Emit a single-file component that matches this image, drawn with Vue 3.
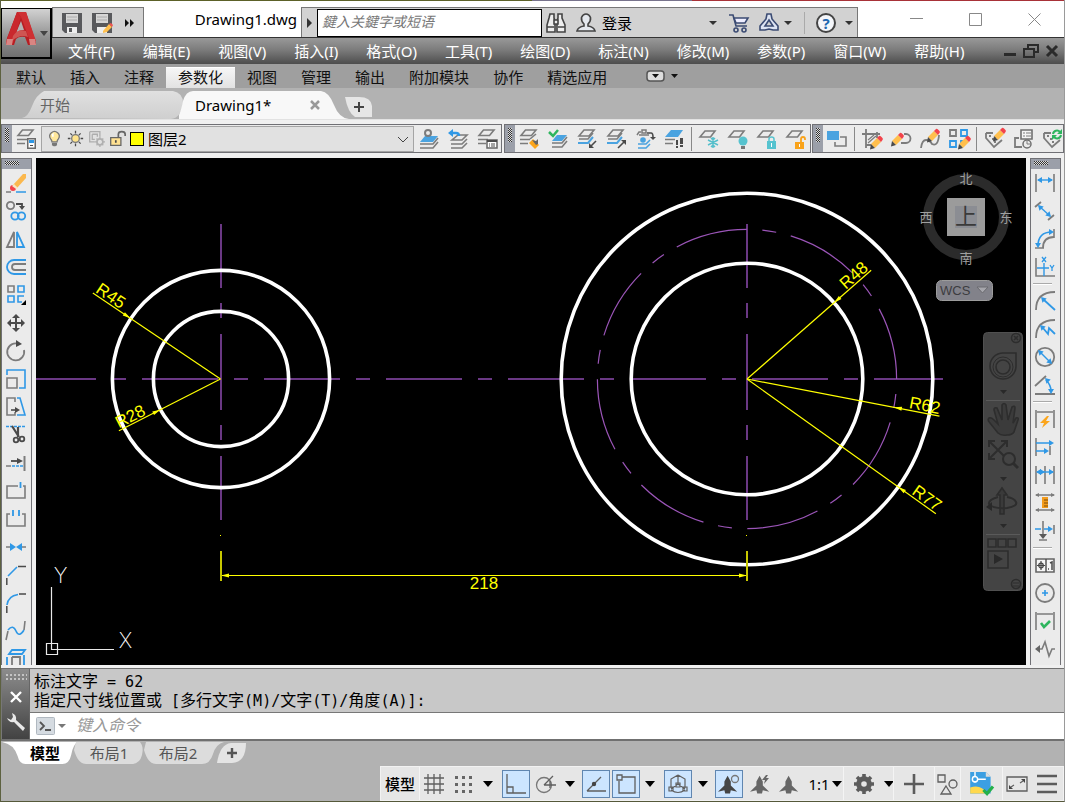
<script setup>
const line = (d, c, w) => `<path d="${d}" fill="none" stroke="${c}" stroke-width="${w}"/>`
const g = (d, w = 2) => line(d, '#7c7c7c', w)
const b = (d, w = 2) => line(d, '#2f98e6', w)
const k = (d, w = 2) => line(d, '#4a4a4a', w)
const f = (d, c) => `<path d="${d}" fill="${c}"/>`

const pencil = (x, y) =>
  `<g transform="translate(${x} ${y})">` +
  f('M1 7l6-6 4 4-6 6z', '#ffbf4d') + f('M7 1l2-2q1-.5 2 .5l1.500 1.500q.8 1 0 2L11 5z', '#f2434b') +
  f('M1 7l4 4-5 1.500z', '#4a4a4a') + '</g>'
const half = g('M6.500 1H17l-4.500 5.500H2z', 1.6) + g('M1 10.500h10M1 14.500h8', 1.6)
const sheet = g('M6 2h10l-4.500 6H1z', 1.6)
const tag = g('M2 4v5l8 9 8-7M2 4h7', 1.8) + f('M5 6h2v2H5zM8 9h2v2H8zM11 7h2v2h-2zM10 12h2v2h-2z', '#7c7c7c')
const head = (x, y, r, c = '#2f98e6') => `<path d="M0 0L-5-3V3z" fill="${c}" transform="translate(${x} ${y}) rotate(${r})"/>`

const icons = {
  layerProps: half + f('M11 9h9v11h-9z', '#6b6b6b') + f('M12.500 10.500h6v8h-6z', '#fff') + f('M13 11h5v3h-5z', '#2f98e6') + k('M14 16.500h3', 1),
  bulb: '<path d="M7 14Q7 12 5.500 10.500A5.500 5.500 0 1 1 14.500 10.500Q13 12 13 14z" fill="#ffe79b" stroke="#777" stroke-width="1.500"/>' + f('M7 15h6v3l-2 1H9l-2-1z', '#777') + f('M7 5l2-2v5H7z', '#fff'),
  sun: '<circle cx="10" cy="10" r="4.500" fill="#ffe48d" stroke="#777" stroke-width="1.500"/>' + k('M10 1v3M10 16v3M1 10h3M16 10h3M4 4l2 2M14 14l2 2M4 16l2-2M14 6l2-2', 1.5),
  vpFreeze: line('M2 2h12v6M2 2v12h6M5 5h6v3M5 5v6h3', '#adadad', 1.5) + '<circle cx="14" cy="14" r="3.500" fill="none" stroke="#b0b0b0" stroke-width="2"/>' + line('M14 8v3M14 17v3M8 14h3M17 14h3M10 10l2 2M16 16l2 2M10 18l2-2M16 12l2-2', '#b0b0b0', 1.5),
  unlocked: line('M11 9V5q0-3 4-3t4 3v2', '#666', 2) + '<path d="M2 9h12v9H2z" fill="#ffe191" stroke="#666" stroke-width="1.500"/>' + k('M8 12v3', 2),
  layCurrent: f('M6 7h13l-5 6H1z', '#4aa3e0') + '<circle cx="9" cy="4" r="3" fill="#ebebeb" stroke="#7c7c7c" stroke-width="2"/>' + g('M1 15h13l5-6M1 19h13l5-6', 1.6),
  layPrev: g('M10 6h9l-5 5H4zM3 15h11l5-5M3 19h11l5-5', 1.6) + b('M3 4h5q3 0 3 3', 2.5) + f('M0 4l5-4v8z', '#2f98e6'),
  layState: half + '<path d="M10 11h10v8H10z" fill="#fff" stroke="#666" stroke-width="1.500"/>' + k('M10 12h10', 2) + k('M12 15h1M14 15h4M12 17h1M14 17h4', 1),
  layBrush: half + g('M11 10l6-5', 1.6) + f('M10 14l4-4 6 6-4 4z', '#fba51c') + f('M13 11l4 1 2-2v5l-2 1z', '#666'),
  layCheck: f('M9 6h10l-5 6H4z', '#4aa3e0') + g('M4 14h10l5-6M4 18h10l5-6', 1.6) + line('M1 3l4 4 5-6', '#2db55d', 2.5),
  layIso: g('M7 1h10l-5 6H2zM2 10h9l5-6', 1.6) + line('M1 14h10l5-6', '#4aa3e0', 2) + k('M19 12l-5 5', 1.6) + f('M12 19v-5l5 5z', '#4a4a4a'),
  layUniso: g('M7 1h10l-5 6H2zM2 10h9l5-6', 1.6) + line('M1 14h10l5-6', '#4aa3e0', 2) + k('M12 19l6-6', 1.6) + f('M20 11v5l-5-5z', '#4a4a4a'),
  layCopy: g('M4 6h10M2 6l2-3h2M9 1h2v3H7V1h2', 1.5) + k('M12 4h4q2 0 2 4', 1.6) + f('M15 8h6l-3 3z', '#4a4a4a') + '<circle cx="8" cy="11" r="2.800" fill="#4aa3e0"/>' + line('M3 15h8l4-4M3 19h8l4-4', '#4aa3e0', 1.6),
  layWalk: f('M7 1h12l-5 7H1z', '#4aa3e0') + g('M1 10.500h10M1 14.500h8', 1.6) + f('M12 11h2v5h-2zM12 17h2v2h-2zM16 9h3v6h-3zM16 16h3v2h-3z', '#4a4a4a'),
  layFreeze: sheet + line('M14 8v11M9 11l10 5M9 16l10-5M12 9l2 2 2-2M12 18l2-2 2 2', '#56bfcb', 1.5),
  layOff: sheet + '<circle cx="15" cy="12" r="4.500" fill="#56c3cf"/>' + f('M13 17h4v3h-4z', '#777'),
  layLock: sheet + f('M10 12h9v8h-9z', '#56c3cf') + line('M12 12v-2q0-2 2.500-2t2.500 2v2', '#56c3cf', 1.5) + f('M14 14h1v4h-1z', '#fff'),
  layUnlock: sheet + f('M9 13h9v7H9z', '#f9a31b') + line('M15 13v-3q0-2 2-2t2 2v1', '#f9a31b', 1.8) + f('M13 15h1v3h-1z', '#fff'),
  order: f('M0 2h12v9H0z', '#4aa3e0') + g('M13 8h6v9H8v-4', 1.6),
  hatchEdit: g('M0 5h18M4 0v19M15 3v6M4 16h5', 1.8) + g('M6 11l6-5M6 14l8-7', 1.2) + pencil(8, 8),
  polyEdit: g('M10 14h5a4 4 0 0 0 0-9h-2', 1.8) + pencil(0, 5),
  splineEdit: g('M1 19Q2 11 6 11T12 15Q18 18 19 6', 1.8) + pencil(7, 1),
  arrayEdit: g('M1 1h6v6H1z', 1.8) + b('M12 1h6v6h-6zM1 12h6v6H1zM12 18v-6h3', 1.8) + pencil(9, 8),
  attrEdit: tag + pencil(9, 0),
  blockAttr: g('M6 9H2v9h7', 1.8) + '<path d="M8 1h11v9H8z" fill="#f4f4f4" stroke="#707070" stroke-width="1.600"/>' + g('M10 4h2M13 4h5M10 7h2M13 7h5', 1) + '<circle cx="14" cy="15" r="4" fill="#ebebeb" stroke="#707070" stroke-width="1.500"/>' + g('M14 12v3h3', 1),
  attrSync: tag + line('M11 5a4 4 0 0 1 7-2M19 6a4 4 0 0 1-7 2', '#2db55d', 2) + f('M20 0v5h-5zM10 11V6h5z', '#2db55d'),

  erase: f('M7 12L17 1l3 0v4L11 15z', '#fbb84e') + '<circle cx="7" cy="15" r="3" fill="#f3424b"/>' + f('M8 11l4 4-2 1-4-3z', '#f7e6c4') + g('M0 19h5', 1.5) + b('M10 19h10', 1.5),
  copy: '<circle cx="4.500" cy="4.500" r="3.700" fill="none" stroke="#7c7c7c" stroke-width="1.800"/>' + k('M10 3h6v3', 1.8) + f('M13 5h6l-3 4z', '#4a4a4a') + '<circle cx="9" cy="15" r="3.700" fill="none" stroke="#2f98e6" stroke-width="1.800"/><circle cx="15.500" cy="15" r="3.700" fill="none" stroke="#2f98e6" stroke-width="1.800"/>',
  mirror: g('M8 3v15H1z', 1.8) + b('M11 3v15h7z', 1.8),
  offset: b('M20 3H8a7 7 0 0 0 0 14h12', 1.8) + g('M20 7H9a3 3 0 0 0 0 6h11', 1.8),
  array: g('M2 1h6v6H2z', 1.6) + b('M12 1h6v6h-6zM2 11h6v6H2zM18 11h-6v6h4', 1.6) + f('M20 15v5h-5z', '#000'),
  move: k('M10 3v14M3 10h14', 2) + f('M6 5l4-4 4 4zM6 15l4 4 4-4zM5 6l-4 4 4 4zM15 6l4 4-4 4z', '#4a4a4a'),
  rotate: g('M13 3A8.500 8.500 0 1 0 18 9', 1.8) + f('M10-1l6 4-6 3z', '#4a4a4a'),
  scale: b('M1 6V1h18v18h-6', 1.6) + g('M1 9h10v10H1z', 1.6),
  stretch: g('M9 5V1H1v17h8v-3', 1.6) + b('M11 1h3l5 17h-8', 1.6) + k('M5 13h5', 1.6) + f('M9 10l5 3-5 3z', '#4a4a4a'),
  trim: '<path d="M0 1.500h20" stroke="#2f98e6" stroke-width="1.500" stroke-dasharray="3 1"/>' + k('M6 1l7 11M12 2v10', 2.2) + '<circle cx="10" cy="15" r="2.300" fill="none" stroke="#4a4a4a" stroke-width="1.800"/><circle cx="16" cy="14" r="2.300" fill="none" stroke="#4a4a4a" stroke-width="1.800"/>',
  extend: g('M18.500 3v15') + k('M5 8h7', 1.8) + f('M11 5l6 3-6 3z', '#4a4a4a') + g('M0 13h5', 1.5) + '<path d="M6 13h11" stroke="#2f98e6" stroke-width="1.500" stroke-dasharray="3 1"/>',
  breakPt: g('M12 5H1v12h18V5h-2', 1.6) + b('M14.500 1v6', 1.8),
  breakGap: g('M4 5H1v12h18V5h-3', 1.6) + b('M7 1v6M13 1v6', 1.8),
  join: g('M0 10h6M14 10h6', 1.6) + f('M4 6l6 4-6 4zM16 6l-6 4 6 4z', '#2f98e6'),
  chamfer: b('M2 11L11 2', 1.6) + k('M12 1.500h8M.800 13v7', 1.5),
  fillet: b('M1 12Q2 3 12 1.500', 1.6) + k('M13 1h7M.800 13v7', 1.5),
  blend: g('M0 19l2-9M19 0l-1 9', 1.6) + b('M2 9q5-6 8 1t8-1', 1.6),
  explode: b('M6 1h13l-3 4H3zM1 8v12M18 6v14', 1.8) + g('M6 8h8v12M6 8v12', 1.8),

  dimLinear: g('M1 1v18M19 1v18', 1.6) + b('M3 7h14', 1.4) + head(18, 7, 0) + head(2, 7, 180),
  dimAligned: g('M0 6l6-5M13 19l6-5', 1.8) + b('M4 5l11 10', 1.4) + head(16, 16, 45) + head(3, 4, 225),
  dimArc: g('M8 19Q8 8 19 8', 1.8) + g('M0 19h9M19 0v9', 1.6) + b('M3 17Q3 3 17 3', 1.6) + head(19, 3, 0) + head(3, 19, 90),
  dimOrdinate: g('M1 1v18h19', 1.6) + b('M9 6v13M2 11h12', 1.4) + b('M7 0l4 5M11 0L7 5M15 8l2 3 2-3M17 10v4', 1.3),
  dimRadius: g('M1 19Q1 1 20 1', 1.8) + b('M9 9l11 10', 1.8) + head(6, 6, 225),
  dimJogged: g('M1 19Q1 1 20 1', 1.8) + b('M8 9l5 6 1-6 6 6', 1.8) + head(5, 6, 225),
  dimDiameter: '<circle cx="10" cy="10" r="9.200" fill="none" stroke="#7c7c7c" stroke-width="1.800"/>' + b('M5 5l10 10', 1.4) + head(17, 17, 45) + head(3, 3, 225),
  dimAngular: g('M0 11L11 1M0 19h20', 1.8) + b('M11 5Q16 10 16 16', 1.6) + head(16, 19, 90) + head(10, 3, 225),
  dimQuick: g('M1 1v18M19 1v18M2 3h16', 1.6) + f('M12 7L5 14h4l-2 5 8-7h-4l3-5z', '#fba51c'),
  dimBaseline: g('M1 1v18M15 9v9', 1.6) + b('M1 6h16M1 14h11', 1.4) + head(19, 6, 0) + head(14, 14, 0),
  dimContinue: g('M1 1v18M10 1v18M19 1v18', 1.6) + b('M2 7h16', 1.4) + head(10, 7, 0) + head(19, 7, 0) + head(1, 7, 180),
  dimSpace: g('M1 2h18M1 17h18', 1.4) + f('M0 2l4-2v4zM20 2l-4-2v4zM0 17l4-2v4zM20 17l-4-2v4z', '#7c7c7c') + f('M7 4h6v11H7z', '#f39c1c') + line('M9 7h4M9 10h4M9 13h4', '#7b4b08', 1),
  dimBreak: b('M0 8h6M9 8h5', 1.6) + head(18, 8, 0) + g('M8 0v15M19 4v9M4 19h8', 1.6) + f('M4 13h8l-4 5z', '#5a5a5a'),
  tolerance: '<path d="M1 4h18v13H1z" fill="#f6f6f6" stroke="#666" stroke-width="1.600"/>' + k('M11 4v13', 1.4) + k('M6 6v9M2 10.500h8', 1.2) + '<circle cx="6" cy="10.500" r="2.300" fill="none" stroke="#444" stroke-width="1.200"/>' + k('M13 14h1M15 8l2-1v8', 1.5),
  centerMark: '<circle cx="10" cy="10" r="9" fill="none" stroke="#7c7c7c" stroke-width="1.800"/>' + b('M10 7v6M7 10h6', 1.6),
  inspect: g('M1 1v18M19 1v18M2 3h16', 1.6) + line('M6 12l3 4 6-6', '#2db55d', 2.6),
  jogLine: g('M3 10h4l3-7 4 14 3-7h3', 1.6) + f('M0 10l5-4v8z', '#666'),
}

const menus = ['文件(F)', '编辑(E)', '视图(V)', '插入(I)', '格式(O)', '工具(T)', '绘图(D)', '标注(N)', '修改(M)', '参数(P)', '窗口(W)', '帮助(H)']
const ribbon = ['默认', '插入', '注释', '参数化', '视图', '管理', '输出', '附加模块', '协作', '精选应用']
const layersB = ['layBrush', 'layCheck', 'layIso', 'layUniso', 'layCopy', 'layWalk', '|', 'layFreeze', 'layOff', 'layLock', 'layUnlock']
const modify2 = ['order', '|', 'hatchEdit', 'polyEdit', 'splineEdit', 'arrayEdit', '|', 'attrEdit', 'blockAttr', 'attrSync']
const leftTools = ['erase', 'copy', 'mirror', 'offset', 'array', 'move', 'rotate', 'scale', 'stretch', 'trim', 'extend', 'breakPt', 'breakGap', 'join', 'chamfer', 'fillet', 'blend', 'explode']
const rightTools = ['dimLinear', 'dimAligned', 'dimArc', 'dimOrdinate', '|', 'dimRadius', 'dimJogged', 'dimDiameter', 'dimAngular', '|', 'dimQuick', 'dimBaseline', 'dimContinue', 'dimSpace', 'dimBreak', '|', 'tolerance', 'centerMark', 'inspect', 'jogLine']

const logLines = ['标注文字 = 62', '指定尺寸线位置或 [多行文字(M)/文字(T)/角度(A)]:']
const runs = (t) => t.match(/[\x20-\x7e]+|[^\x20-\x7e]+/g).map((s) => ({ s, latin: s.charCodeAt(0) < 127 }))

const person = 'M12 1l4 7v5l8 8-8-2-1 4h-6l-1-4-8 2 8-8V8z'
const tri = f('M5 7h10l-5 6z', '#000')
const s = (d, w = 1.3) => line(d, '#5f5f5f', w)
const status = [
  { id: 'grid', w: 29, sep: true, art: s('M4 0v20M10 0v20M16 0v20M0 4h20M0 10h20M0 16h20') },
  { id: 'snap', w: 30, art: f('M2 2h3v3H2zM9 2h3v3H9zM16 2h3v3h-3zM2 9h3v3H2zM9 9h3v3H9zM16 9h3v3h-3zM2 16h3v3H2zM9 16h3v3H9zM16 16h3v3h-3z', '#666') },
  { id: 'snap menu', w: 20, art: tri },
  { id: 'ortho', w: 36, on: true, art: s('M1 0v19h19M1 13h6v6') },
  { id: 'polar', w: 24, art: '<circle cx="8" cy="11" r="7.500" fill="none" stroke="#777" stroke-width="1.300"/>' + s('M8 11h12M8 11l9-9M14 7v7') },
  { id: 'polar menu', w: 23, art: tri },
  { id: 'tracking', w: 30, on: true, art: s('M1 17L15 3M1 17h19') + '<circle cx="8" cy="10" r="2.200" fill="#444"/>' },
  { id: 'object snap', w: 30, on: true, art: s('M6 3h13v16H3V7M1 1h5v5H1z') },
  { id: 'snap options', w: 18, art: tri },
  { id: 'isometric', w: 38, on: true, art: s('M10 1l7 4v9M10 1L3 5v9M10 1v9M10 10l-7 5M10 10l7 5M3 16q7 5 14 0M8 9h4v4H8zM1 13h4v4H1zM15 13h4v4h-4z', 1.2) },
  { id: 'isometric menu', w: 12, art: tri },
  { id: 'annotation', w: 40, on: true, art: '<g transform="translate(-1 1) scale(.8)">' + f(person, '#454545') + '</g><circle cx="16" cy="5" r="3.500" fill="none" stroke="#777" stroke-width="1.300"/>' },
  { id: 'auto scale', w: 22, art: '<g transform="translate(0 1) scale(.8)">' + f(person, '#666') + '</g>' + f('M16 1l-4 5h3l-1 4 5-6h-3l2-3z', '#666') },
  { id: 'scale', w: 36, art: '<g transform="translate(0 1) scale(.8)">' + f(person, '#666') + '</g>' },
  { id: '1:1', w: 24, text: '1:1' },
  { id: 'scale menu', w: 12, art: tri },
  { id: 'workspace', w: 42, sep: true, art: '<circle cx="10" cy="10" r="5.300" fill="none" stroke="#5c5c5c" stroke-width="5"/>' + line('M10 0v4M10 16v4M0 10h4M16 10h4M3 3l3 3M14 14l3 3M3 17l3-3M14 6l3-3', '#5c5c5c', 3.6) },
  { id: 'workspace menu', w: 8, art: tri },
  { id: 'monitor', w: 41, sep: true, art: line('M10 0v20M0 10h20', '#5c5c5c', 2.6) },
  { id: 'isolate', w: 26, sep: true, art: s('M1 1h7v7H1zM9 12l5 8H4z', 1.3) + '<circle cx="16" cy="10" r="4" fill="none" stroke="#5f5f5f" stroke-width="1.300"/>' },
  { id: 'hardware', w: 42, sep: true, big: true, art: f('M1 0h13l4 4v14H1z', '#3c9fe2') + f('M14 0v4h4z', '#ddd') + f('M1 13q9-3 14 5H1z', '#ffd84d') + line('M5 0v9M5 6h9', '#fff', 1.2) + '<circle cx="5" cy="6" r="2.200" fill="#3c9fe2" stroke="#fff" stroke-width="1.200"/>' + line('M12 15l3 3 5-6', '#24b04b', 2.6) },
  { id: 'clean screen', w: 30, sep: true, art: s('M0 3h20v14H0z') + f('M18 5v4l-4-4zM2 15v-4l4 4z', '#444') + s('M16 7l-3 2M4 13l3-2', 1.2) },
  { id: 'customize', w: 30, art: line('M0 2h20M0 10h20M0 18h20', '#5c5c5c', 2.4) },
]

const cx = 747
const dims = [
  { t: 'R45', x: 220.5, a: 34, len: 154, r: 108.6, left: true },
  { t: 'R28', x: 220.5, a: -27, len: 114, r: 67.6, left: true },
  { t: 'R48', x: cx, a: -41.2, len: 165, r: 115.8 },
  { t: 'R62', x: cx, a: 10.9, len: 196, r: 149.6 },
  { t: 'R77', x: cx, a: 35.5, len: 232, r: 185.8 },
]
</script>

<template>
  <div class="app">
    <div class="backdrop"></div>
    <header class="titlebar">
      <button class="logo" aria-label="AutoCAD">
        <svg width="48" height="48" viewBox="0 0 48 48">
          <path d="M15 3h9l10 31-1 2h-7l-3-8q-6-1-9 2l-2 6H4l1-7z" fill="#b71d22" />
          <path d="M15 3h9l10 29h-6L19 8z" fill="#cf3033" />
          <path d="M19 12l3 9q-5 0-8 3z" fill="#b4b4b4" />
          <path d="M5 30l10-27 4 5-8 26H4z" fill="#c9282d" />
          <path d="M11 27q5-8 13-5l2 6q-8-3-16 4z" fill="#cf5552" />
          <path d="M5 30h6l-1 6H4zM27 30h6l1 6h-6z" fill="#d98582" />
          <path d="M38 22h8l-4 5z" fill="#444" />
        </svg>
      </button>
      <div class="quick">
        <button aria-label="Save"><svg width="20" height="20" viewBox="0 0 20 20"><path d="M0 0h20v20H3l-3-3z" fill="#58595c" /><path d="M4 1h12v9H4z" fill="#d6d6d6" /><path d="M5 14h10v6H5z" fill="#eee" /><path d="M7 15h3v4H7z" fill="#58595c" /><path d="M5 4h10M5 7h10" stroke="#aaa" /></svg></button>
        <button aria-label="Save as"><svg width="20" height="20" viewBox="0 0 20 20"><path d="M0 0h20v20H3l-3-3z" fill="#58595c" /><path d="M4 1h12v9H4z" fill="#d6d6d6" /><path d="M5 14h10v6H5z" fill="#eee" /><path d="M5 4h10M5 7h10" stroke="#aaa" /><path d="M11 18l6-7 3 3-5 5-4 1z" fill="#ffbf4d" /><path d="M17 11l2-1 2 2-1 2z" fill="#ef5350" /></svg></button>
        <button aria-label="More"><svg width="10" height="8" viewBox="0 0 10 8"><path d="M0 0l4 4-4 4zM5 0l4 4-4 4z" fill="#111" /></svg></button>
      </div>
      <h1 class="title">Drawing1.dwg</h1>
      <div class="search">
        <button class="expand" aria-label="Toggle search"><svg width="6" height="10" viewBox="0 0 6 10"><path d="M0 0l5 5-5 5z" fill="#333" /></svg></button>
        <input type="text" placeholder="鍵入关鍵字或短语" aria-label="搜索" />
        <button class="bino" aria-label="Find"><svg width="20" height="20" viewBox="0 0 20 20" fill="#eee" stroke="#444" stroke-width="1.600"><path d="M4 1h4v4l1 3v11H1v-7l2-7zM12 1h4v4l3 7v7h-8V8l1-3z" /><path d="M8 7h4v4H8zM1 14h7M12 14h7" /></svg></button>
        <button class="login"><svg width="20" height="20" viewBox="0 0 20 20" fill="#e4e8ee" stroke="#444" stroke-width="1.600"><path d="M1 18q1-4 7-5V11Q5 8 5.500 4.500 7 1 10 1t4.500 3.500Q15 8 12 11v2q6 1 7 5z" /></svg><span>登录</span></button>
        <button class="dd push" aria-label="Account menu"><i class="tri"></i></button>
        <button class="cart" aria-label="App store"><svg width="20" height="20" viewBox="0 0 20 20" fill="none" stroke="#3b4b73" stroke-width="1.600"><path d="M0 2h4l3 11h11" /><path d="M5 5h14l-3 5H7z" fill="#eef" /><circle cx="7" cy="17" r="2" /><circle cx="15" cy="17" r="2" /></svg></button>
        <button class="a360" aria-label="Cloud"><svg width="20" height="20" viewBox="0 0 20 20" fill="#dde4f3" stroke="#3b4b73" stroke-width="1.600"><path d="M8 1h4l1 5 6 7v4h-5l-4-1-4 1H1v-4l6-7z" /><path d="M10 7l4 6H6z" fill="#d0d0d0" /></svg></button>
        <button class="dd" aria-label="Cloud menu"><i class="tri"></i></button>
        <span class="bar"></span>
        <button class="help" aria-label="Help">?</button>
        <button class="dd" aria-label="Help menu"><i class="tri"></i></button>
      </div>
      <div class="winctl">
        <button aria-label="Minimize"><svg width="13" height="13" viewBox="0 0 13 13"><path d="M0 5.500h13" /></svg></button>
        <button aria-label="Maximize"><svg width="13" height="13" viewBox="0 0 13 13"><path d="M.500.500h12v12H.500z" /></svg></button>
        <button aria-label="Close"><svg width="13" height="13" viewBox="0 0 13 13"><path d="M.500.500l12 12M12.500.500l-12 12" /></svg></button>
      </div>
    </header>

    <nav class="menubar">
      <button v-for="m in menus" :key="m">{{ m }}</button>
      <span class="mdi">
        <button aria-label="Minimize drawing"><svg width="12" height="14" viewBox="0 0 12 14"><path d="M0 9h12v3H0z" fill="#2a2a2a" /></svg></button>
        <button aria-label="Restore drawing"><svg width="16" height="14" viewBox="0 0 16 14" fill="none" stroke="#2a2a2a" stroke-width="2"><path d="M5 4V1h10v7h-4M1 5h10v8H1z" /></svg></button>
        <button aria-label="Close drawing"><svg width="12" height="14" viewBox="0 0 12 14"><path d="M1 2l10 10M11 2L1 12" stroke="#2a2a2a" stroke-width="3" /></svg></button>
      </span>
    </nav>

    <nav class="ribbon">
      <button v-for="r in ribbon" :key="r" :class="{ active: r === '参数化' }">{{ r }}</button>
      <button class="rmin" aria-label="Minimize ribbon"><svg width="32" height="12" viewBox="0 0 32 12"><rect x="1" y="1" width="17" height="10" rx="3" fill="#ddd" stroke="#555" stroke-width="1.500" /><path d="M6 4h7L9.500 8zM25 4h7l-3.500 4z" fill="#111" /></svg></button>
    </nav>

    <div class="files">
      <div class="ftab start">
        <svg viewBox="0 0 160 28" preserveAspectRatio="none"><defs><linearGradient id="ft" x2="0" y2="1"><stop stop-color="#e0e0e0" /><stop offset="1" stop-color="#cfcfcf" /></linearGradient></defs><path d="M0 27Q6 26 10 15T22 0H150Q160 2 160 12 158 27 148 28z" fill="url(#ft)" /></svg>
        <button>开始</button>
      </div>
      <div class="ftab cur">
        <svg viewBox="0 0 170 28" preserveAspectRatio="none"><path d="M0 24Q2 20 4 10 7 0 14 0H142Q150 1 155 14T170 28H0z" fill="#f8f8f8" /></svg>
        <button>Drawing1*</button>
        <button class="x" aria-label="Close tab"><svg width="10" height="10" viewBox="0 0 10 10"><path d="M1 1l8 8M9 1L1 9" stroke="#999" stroke-width="2.500" /></svg></button>
      </div>
      <button class="fadd" aria-label="New tab"><svg width="28" height="20" viewBox="0 0 28 20"><path d="M0 0h14q12 0 13 9v11H10Q3 16 0 0z" fill="#e6e6e6" /><path d="M14 5v10M9 10h10" stroke="#444" stroke-width="2" /></svg></button>
    </div>

    <div class="tools">
      <div class="bar1 tb">
        <span class="grip"></span>
        <button class="tool" aria-label="layerProps"><svg class="ico" viewBox="0 0 20 20" v-html="icons.layerProps"></svg></button>
        <div class="combo">
          <svg v-for="n in ['bulb', 'sun', 'vpFreeze', 'unlocked']" :key="n" class="small" viewBox="0 0 20 20" v-html="icons[n]"></svg>
          <span class="swatch"></span>
          <select aria-label="图层"><option>图层2</option></select>
          <svg class="chev" viewBox="0 0 10 6"><path d="M0 0l5 5 5-5" fill="none" stroke="#444" /></svg>
        </div>
        <button v-for="n in ['layCurrent', 'layPrev', 'layState']" :key="n" class="tool" :aria-label="n"><svg class="ico" viewBox="0 0 20 20" v-html="icons[n]"></svg></button>
      </div>
      <div v-for="(bar, i) in [layersB, modify2]" :key="i" class="tb">
        <span class="grip"></span>
        <template v-for="(n, j) in bar" :key="j">
          <span v-if="n === '|'" class="vsep"></span>
          <button v-else class="tool" :aria-label="n"><svg class="ico" viewBox="0 0 20 20" v-html="icons[n]"></svg></button>
        </template>
      </div>
    </div>

    <main class="work">
      <aside class="side">
        <span class="hgrip"></span>
        <button v-for="n in leftTools" :key="n" class="stool" :aria-label="n"><svg class="ico" viewBox="0 0 20 20" v-html="icons[n]"></svg></button>
      </aside>

      <div class="canvas">
        <svg class="drawing" viewBox="36 158 990 507">
          <g fill="none" stroke="#6a3884" stroke-width="2">
            <path d="M20 379H943" stroke-dasharray="76 16 14 16" />
            <path d="M221 212V520M747 212V520" stroke-dasharray="76 15 15 16" />
            <circle :cx="cx" cy="379" r="149.600" stroke="#9b55b8" stroke-width="1.200" stroke-dasharray="73 15 14 15.500" transform="translate(0 758) scale(1 -1)" />
          </g>
          <g fill="none" stroke="#fff" stroke-width="3.600">
            <circle cx="221" cy="379" r="108.600" /><circle cx="221" cy="379" r="67.600" />
            <circle :cx="cx" cy="379" r="185.800" /><circle :cx="cx" cy="379" r="115.800" />
          </g>
          <path d="M747 208V224M221 208V224" stroke="#000" stroke-width="3" />
          <g v-for="d in dims" :key="d.t" :transform="`translate(${d.x} 379) rotate(${d.a})`">
            <path :d="`M0 0H${d.left ? -d.len : d.len}`" stroke="#ff0" stroke-width="1.200" />
            <path :d="d.left ? `M${-d.r} 0l-8-2v4z` : `M${d.r} 0l8-2v4z`" fill="#ff0" />
            <text class="dim" :x="d.left ? 1 - d.len : d.len - 32" y="-2">{{ d.t }}</text>
          </g>
          <path d="M221 575.500H747" stroke="#ff0" stroke-width="1.200" />
          <path d="M221 575.500l8-2v4zM747 575.500l-8-2v4z" fill="#ff0" />
          <path d="M221 551V581M747 551V581" stroke="#c8c800" stroke-width="2" />
          <path d="M220 535.500h1M746 535.500h1" stroke="#ff0" />
          <text class="dim" x="484" y="589" text-anchor="middle">218</text>

          <g fill="none" stroke="#e8e8e8" stroke-width="1.200"><path d="M51.500 587V649.500H114" /><path d="M46.500 643.500h11v11h-11z" /></g>
          <text class="axis" x="60.500" y="583" text-anchor="middle">Y</text>
          <text class="axis" x="125.500" y="648" text-anchor="middle">X</text>

          <circle cx="966" cy="217" r="38" fill="none" stroke="#2b2b2b" stroke-width="10" />
          <path d="M947 198h38v38h-38z" fill="#9b9b9b" /><path d="M955 206h22v22h-22z" fill="#8b8d93" />
          <text class="cube" x="966" y="224" text-anchor="middle">上</text>
          <g class="compass" text-anchor="middle"><text x="966" y="183">北</text><text x="926" y="222">西</text><text x="1006" y="222">东</text><text x="966" y="263">南</text></g>
          <rect x="936.500" y="280.500" width="56" height="20" rx="5" fill="#82828a" stroke="#9c9c9c" />
          <text class="wcs" x="940" y="295">WCS</text>
          <path d="M977 287h11l-5.500 6z" fill="#a6a6ac" stroke="#6b6b70" />

          <g fill="none" stroke="#2d2d2d" stroke-width="1.600">
            <rect x="983.500" y="332.500" width="39" height="258" rx="4" fill="#444" stroke="#505050" stroke-width="1" />
            <circle cx="1016" cy="338" r="4.500" /><path d="M1014 336l4 4M1018 336l-4 4" />
            <path d="M1003 353h13v13a13 13 0 1 1-13-13z" /><circle cx="1003" cy="367" r="7" /><circle cx="1003" cy="367" r="10" stroke-width="1" />
            <path d="M986 400.500h34M986 534.500h34" stroke="#5a5a5a" stroke-width="1" />
            <path d="M998 433l-8-10q-3-3-1-5 2-1 5 2l4 4-4-14q0-3 3-2l5 12v-15q2-3 4 0l2 15 4-13q3-2 3 1l-2 15 3-5q3-1 2 2l-4 12q-2 3-7 3-6 1-9-2z" fill="#3b3b3b" />
            <path d="M989 441l17 17M1007 441l-18 18M989 447v-6h6M1001 441h6v6M989 453v6h6" stroke-width="2" />
            <circle cx="1009" cy="459" r="6" fill="#444" stroke-width="2" /><path d="M1013 463l5 5" stroke-width="3" />
            <path d="M1000 514v-19h-3l5-7 5 7h-3v19z" fill="#3a3a3a" /><path d="M998 497Q988 500 989 504q4 5 18 4 11-2 9-6-2-4-9-5" stroke-width="2" />
            <path d="M988 539h8v8h-8zM998 539h8v8h-8zM1008 539h8v8h-8zM988 551h20v17h-20z" />
            <circle cx="1016" cy="584" r="4.500" /><path d="M1013 583h6M1013 586h6" stroke-width="1" />
          </g>
          <path d="M1000 390h7l-3.500 4zM1000 477h7l-3.500 4zM1000 524h7l-3.500 4zM994 554l9 5-9 5zM992 502v9l-6-4z" fill="#292929" />
        </svg>
      </div>

      <aside class="side">
        <span class="hgrip"></span>
        <template v-for="(n, i) in rightTools" :key="i">
          <span v-if="n === '|'" class="hsep"></span>
          <button v-else class="stool" :aria-label="n"><svg class="ico" viewBox="0 0 20 20" v-html="icons[n]"></svg></button>
        </template>
      </aside>
    </main>

    <section class="command">
      <div class="cmdside">
        <span class="dots"></span>
        <button aria-label="Close command line"><svg width="12" height="12" viewBox="0 0 12 12"><path d="M1 1l10 10M11 1L1 11" stroke="#fff" stroke-width="2.400" /></svg></button>
        <button aria-label="Customize"><svg width="18" height="18" viewBox="0 0 18 18"><path d="M5 0q5 2 4 7l9 8-2 3-9-9Q2 10 0 5l4 2 2-3z" fill="#e8e8e8" /></svg></button>
      </div>
      <div class="cmdmain">
        <div class="log">
          <div v-for="l in logLines" :key="l"><span v-for="(r, i) in runs(l)" :key="i" :class="{ latin: r.latin }">{{ r.s }}</span></div>
        </div>
        <div class="entry">
          <button aria-label="Recent commands"><svg width="32" height="18" viewBox="0 0 32 18"><rect x=".500" y=".500" width="18" height="17" rx="1" fill="#d5dbe1" stroke="#b0b8c0" /><path d="M4 5l4 4-4 4M9 13h6" fill="none" stroke="#555" stroke-width="1.800" /><path d="M22 7h8l-4 4z" fill="#777" /></svg></button>
          <input type="text" placeholder="键入命令" aria-label="命令" />
        </div>
      </div>
    </section>

    <nav class="layouts">
      <div class="ltab model"><svg viewBox="0 0 78 22" preserveAspectRatio="none"><path d="M0 0H78Q73 2 71 13 69 22 62 22H24Q18 22 16 14 12 2 0 0z" fill="#fff" /></svg><button>模型</button></div>
      <div class="ltab"><svg viewBox="0 0 70 22" preserveAspectRatio="none"><path d="M2 0H66Q70 5 68 13T59 22H12Q4 22 0 8z" fill="#dcdcdc" /></svg><button>布局1</button></div>
      <div class="ltab"><svg viewBox="0 0 80 22" preserveAspectRatio="none"><path d="M2 0H80Q72 2 69 12T58 22H12Q4 22 0 8z" fill="#dcdcdc" /></svg><button>布局2</button></div>
      <button class="ladd" aria-label="New layout"><svg width="29" height="20" viewBox="0 0 29 20"><path d="M0 20Q3 1 14 0h15q0 19-14 20z" fill="#e4e4e4" /><path d="M15 5v10M10 10h10" stroke="#555" stroke-width="2.400" /></svg></button>
    </nav>

    <footer class="statusrow">
      <div class="status">
        <button class="cell mtext">模型</button>
        <button v-for="c in status" :key="c.id" class="cell" :class="{ sep: c.sep }" :style="{ width: c.w + 'px' }" :aria-label="c.id">
          <span v-if="c.text" class="ratio">{{ c.text }}</span>
          <span v-else :class="['pad', { on: c.on, big: c.big }]"><svg viewBox="0 0 20 20" v-html="c.art"></svg></span>
        </button>
      </div>
    </footer>
  </div>
</template>

<style>
html, body { margin: 0; background: #b2b2b2; }
</style>

<style scoped>
* { box-sizing: border-box; }
.app {
  height: 100vh; display: flex; flex-direction: column; overflow: hidden;
  border-left: 1px solid #5d6140; border-right: 1px solid #9a9a9a; border-bottom: 1px solid #55593a;
  background: #b2b2b2; color: #111;
  font: 15px/20px "Noto Sans", "Noto Sans CJK SC", sans-serif;
}
button { border: 0; background: none; padding: 0; margin: 0; font: inherit; color: inherit; display: flex; align-items: center; justify-content: center; white-space: nowrap; }
svg { display: block; flex: none; overflow: visible; }
.backdrop { height: 1px; flex: none; background: linear-gradient(90deg, #5c6128 0 50%, #70742f 50% 50%, #77738c 50% 65%, #a83238 65%); }

.titlebar { position: relative; flex: none; height: 37px; background: #fff; display: flex; align-items: flex-end; border-bottom: 1px solid #333; }
.logo { position: absolute; left: 0; top: 7px; width: 51px; height: 51px; border: 1px solid #000; border-width: 1px 2px 2px 1px; z-index: 2; background: linear-gradient(#d2d2d2, #8f8f8f 60%, #6f6f6f); }
.quick { margin-left: 51px; width: 92px; height: 30px; background: #d2d2d2; border: 1px solid #777; border-bottom: 0; display: flex; align-items: center; padding-left: 9px; gap: 10px; }
.quick button:last-child { margin-left: 3px; }
.title { margin: 0; width: 157px; padding-right: 4px; text-align: right; font-size: 15px; line-height: 20px; font-weight: 400; align-self: center; color: #000; }
.search { flex: 1; height: 30px; background: #d2d2d2; border: 1px solid #777; border-bottom: 0; display: flex; align-items: center; }
.expand { width: 15px; }
.search input { width: 225px; height: 28px; border: 1px solid #000; background: #fff; padding: 0 4px 3px; font: italic 14px/20px "Noto Sans", "Noto Sans CJK SC", sans-serif; }
.search input::placeholder { color: #777; opacity: 1; }
.bino { margin-left: 4px; }
.login { margin-left: 10px; gap: 6px; color: #000; }
.dd { width: 12px; }
.push { margin-left: auto; }
.tri { border: 4px solid transparent; border-top-color: #333; border-bottom: 0; }
.cart { margin-left: 10px; }
.a360 { margin: 0 3px 0 10px; }
.bar { width: 1px; height: 22px; background: #aaa; margin: 0 11px 0 10px; }
.help { width: 20px; height: 20px; border: 2px solid #444; border-radius: 50%; background: #f4f6fa; color: #2067b0; font-weight: 700; line-height: 16px; margin-right: 7px; }
.search .dd:last-child { margin-right: 2px; }
.winctl { width: 206px; align-self: stretch; display: flex; align-items: center; justify-content: flex-end; gap: 46px; padding-right: 23px; }
.winctl path { fill: none; stroke: #888; }

.menubar { flex: none; height: 26px; display: flex; align-items: center; gap: 28px; padding: 0 6px 0 67px; color: #fff; background: linear-gradient(#999, #7c7c7c 45%, #4d4d4d); }
.mdi { margin-left: auto; display: flex; gap: 7px; }

.ribbon { flex: none; height: 24px; display: flex; padding: 3px 0 0 3px; background: #9f9f9f; }
.ribbon button { padding: 0 12px 2px; }
.ribbon .active { background: linear-gradient(#f6f6f6, #e2e2e2); border-top: 1px solid #fff; }
.ribbon .rmin { margin-left: 15px; padding-bottom: 4px; }

.files { flex: none; height: 31px; display: flex; align-items: flex-end; background: #b2b2b2; }
.ftab { position: relative; height: 28px; display: flex; align-items: center; }
.ftab svg { position: relative; }
.ftab > svg { position: absolute; left: 0; top: 0; width: 100%; height: 100%; }
.ftab button { position: relative; }
.start { width: 161px; margin-left: 21px; padding-left: 18px; color: #666; }
.cur { width: 170px; margin-left: -4px; padding-left: 16px; gap: 39px; color: #000; }
.fadd { align-self: center; margin: 6px 0 0 -4px; }

.tools { flex: none; height: 39px; padding: 4px 0 5px; display: flex; background: #f0f0f0; gap: 2px; border-top: 1px solid #e2e2e2; }
.tb { height: 29px; display: flex; align-items: center; border: 1px solid #707075; background: #ebebeb; padding-right: 4px; gap: 9px; }
.bar1 { flex: 1; min-width: 0; }
.tb:last-child { padding-right: 1px; margin-left: -1px; }
.grip { width: 10px; height: 27px; background: #9b9fa9; margin-right: -5px; position: relative; }
.grip::after { content: ""; position: absolute; left: 3px; top: 3px; width: 4px; height: 14px; background: repeating-conic-gradient(#ddd 0 25%, #333 0 50%) 0 0 / 2px 2px; }
.tool { width: 20px; height: 20px; flex: none; }
.ico { width: 20px; height: 20px; }
.vsep { width: 1px; height: 24px; background: #888; margin: 0 -2px; }
.combo { position: relative; flex: 1; min-width: 0; height: 26px; margin: 0 -4px; display: flex; align-items: center; gap: 4px; padding: 0 4px; background: #e1e1e1; border: 1px solid #a5a5a5; }
.small { width: 17px; height: 17px; }
.swatch { width: 14px; height: 14px; background: #ff0; border: 1px solid #000; }
.combo select { appearance: none; flex: 1; min-width: 0; border: 0; background: none; padding: 0; font: inherit; color: #000; }
.chev { position: absolute; right: 5px; top: 10px; width: 10px; height: 6px; pointer-events: none; }

.work { flex: 1; min-height: 0; display: flex; gap: 4px; background: #f0f0f0; padding-right: 3px; border-bottom: 3px solid #f0f0f0; }
.side { width: 31px; flex: none; overflow: hidden; background: #ebebeb; border: 1px solid #707075; border-bottom: 0; display: flex; flex-direction: column; }
.hgrip { flex: none; height: 10px; background: #9b9fa9; position: relative; }
.hgrip::after { content: ""; position: absolute; left: 3px; top: 2px; width: 14px; height: 4px; background: repeating-conic-gradient(#ddd 0 25%, #333 0 50%) 0 0 / 2px 2px; }
.stool { flex: none; width: 27px; height: 28px; }
.hsep { flex: none; width: 19px; height: 2px; margin: 2px 0 2px 2px; background: #aaa; border-bottom: 1px solid #fff; }
.canvas { flex: 1; min-width: 0; background: #000; overflow: hidden; }
.drawing { width: 100%; height: 100%; }
.drawing text { font-family: "Liberation Sans", "Noto Sans CJK SC", sans-serif; }
.dim { font-size: 17px; fill: #ff0; }
.drawing .axis { font-family: Inter, sans-serif; font-size: 21px; font-weight: 200; fill: #fff; }
.cube { font-size: 22px; fill: #3a3a3a; }
.compass { font-size: 13px; fill: #a0a0a0; }
.wcs { font-size: 13px; fill: #3c3c40; }

.command { flex: none; height: 73px; display: flex; border: 1px solid #707070; border-width: 1px 0 2px; }
.cmdside { width: 28px; display: flex; flex-direction: column; align-items: center; gap: 10px; padding-top: 4px; background: linear-gradient(#8c8c8c, #424242); border-left: 1px solid #777; }
.dots { width: 22px; height: 8px; background: radial-gradient(circle, #c4c4c4 1px, transparent 1px) 0 0 / 4px 4px; }
.cmdmain { flex: 1; min-width: 0; display: flex; flex-direction: column; border-left: 1px solid #666; }
.log { height: 44px; padding: 3px 4px 0; background: #c8c8c8; border-bottom: 1px solid #777; color: #000; font: 16px/19px "DejaVu Sans Mono", "Noto Sans CJK SC", monospace; white-space: pre; }
.log div { height: 19px; }
.latin { font-size: 15px; }
.entry { flex: 1; display: flex; align-items: center; background: #fff; padding-left: 6px; }
.entry input { flex: 1; min-width: 0; border: 0; background: none; padding: 0 0 2px 8px; font: italic 16px/22px "Noto Sans", "Noto Sans CJK SC", sans-serif; }
.entry input::placeholder { color: #999; opacity: 1; }

.layouts { flex: none; height: 25px; display: flex; align-items: flex-start; padding: 1px 0 0 1px; }
.ltab { position: relative; height: 22px; width: 70px; display: flex; justify-content: center; color: #555; }
.ltab > svg { position: absolute; left: 0; top: 0; width: 100%; height: 100%; }
.ltab button { position: relative; }
.ltab.model { width: 76px; padding-left: 10px; font-weight: 700; color: #000; }
.ltab:nth-child(2) { margin-left: -4px; }
.ltab:nth-child(3) { width: 80px; padding-right: 12px; }
.ladd { margin-left: -7px; margin-top: 1px; }

.statusrow { flex: none; height: 35px; display: flex; justify-content: flex-end; }
.status { display: flex; height: 35px; background: #e6e6e6; border: 1px solid #f2f2f2; padding-right: 1px; }
.cell { flex: none; height: 100%; }
.mtext { width: 38px; color: #000; font-weight: 500; }
.sep { box-shadow: inset 1px 0 #f4f4f4; }
.pad { flex: none; width: 28px; height: 28px; display: flex; align-items: center; justify-content: center; border: 1px solid transparent; }
.pad svg { width: 20px; height: 20px; }
.pad.big svg { width: 24px; height: 24px; }
.on { background: #cce5ff; border-color: #6086b0; }
.ratio { color: #000; }
</style>
